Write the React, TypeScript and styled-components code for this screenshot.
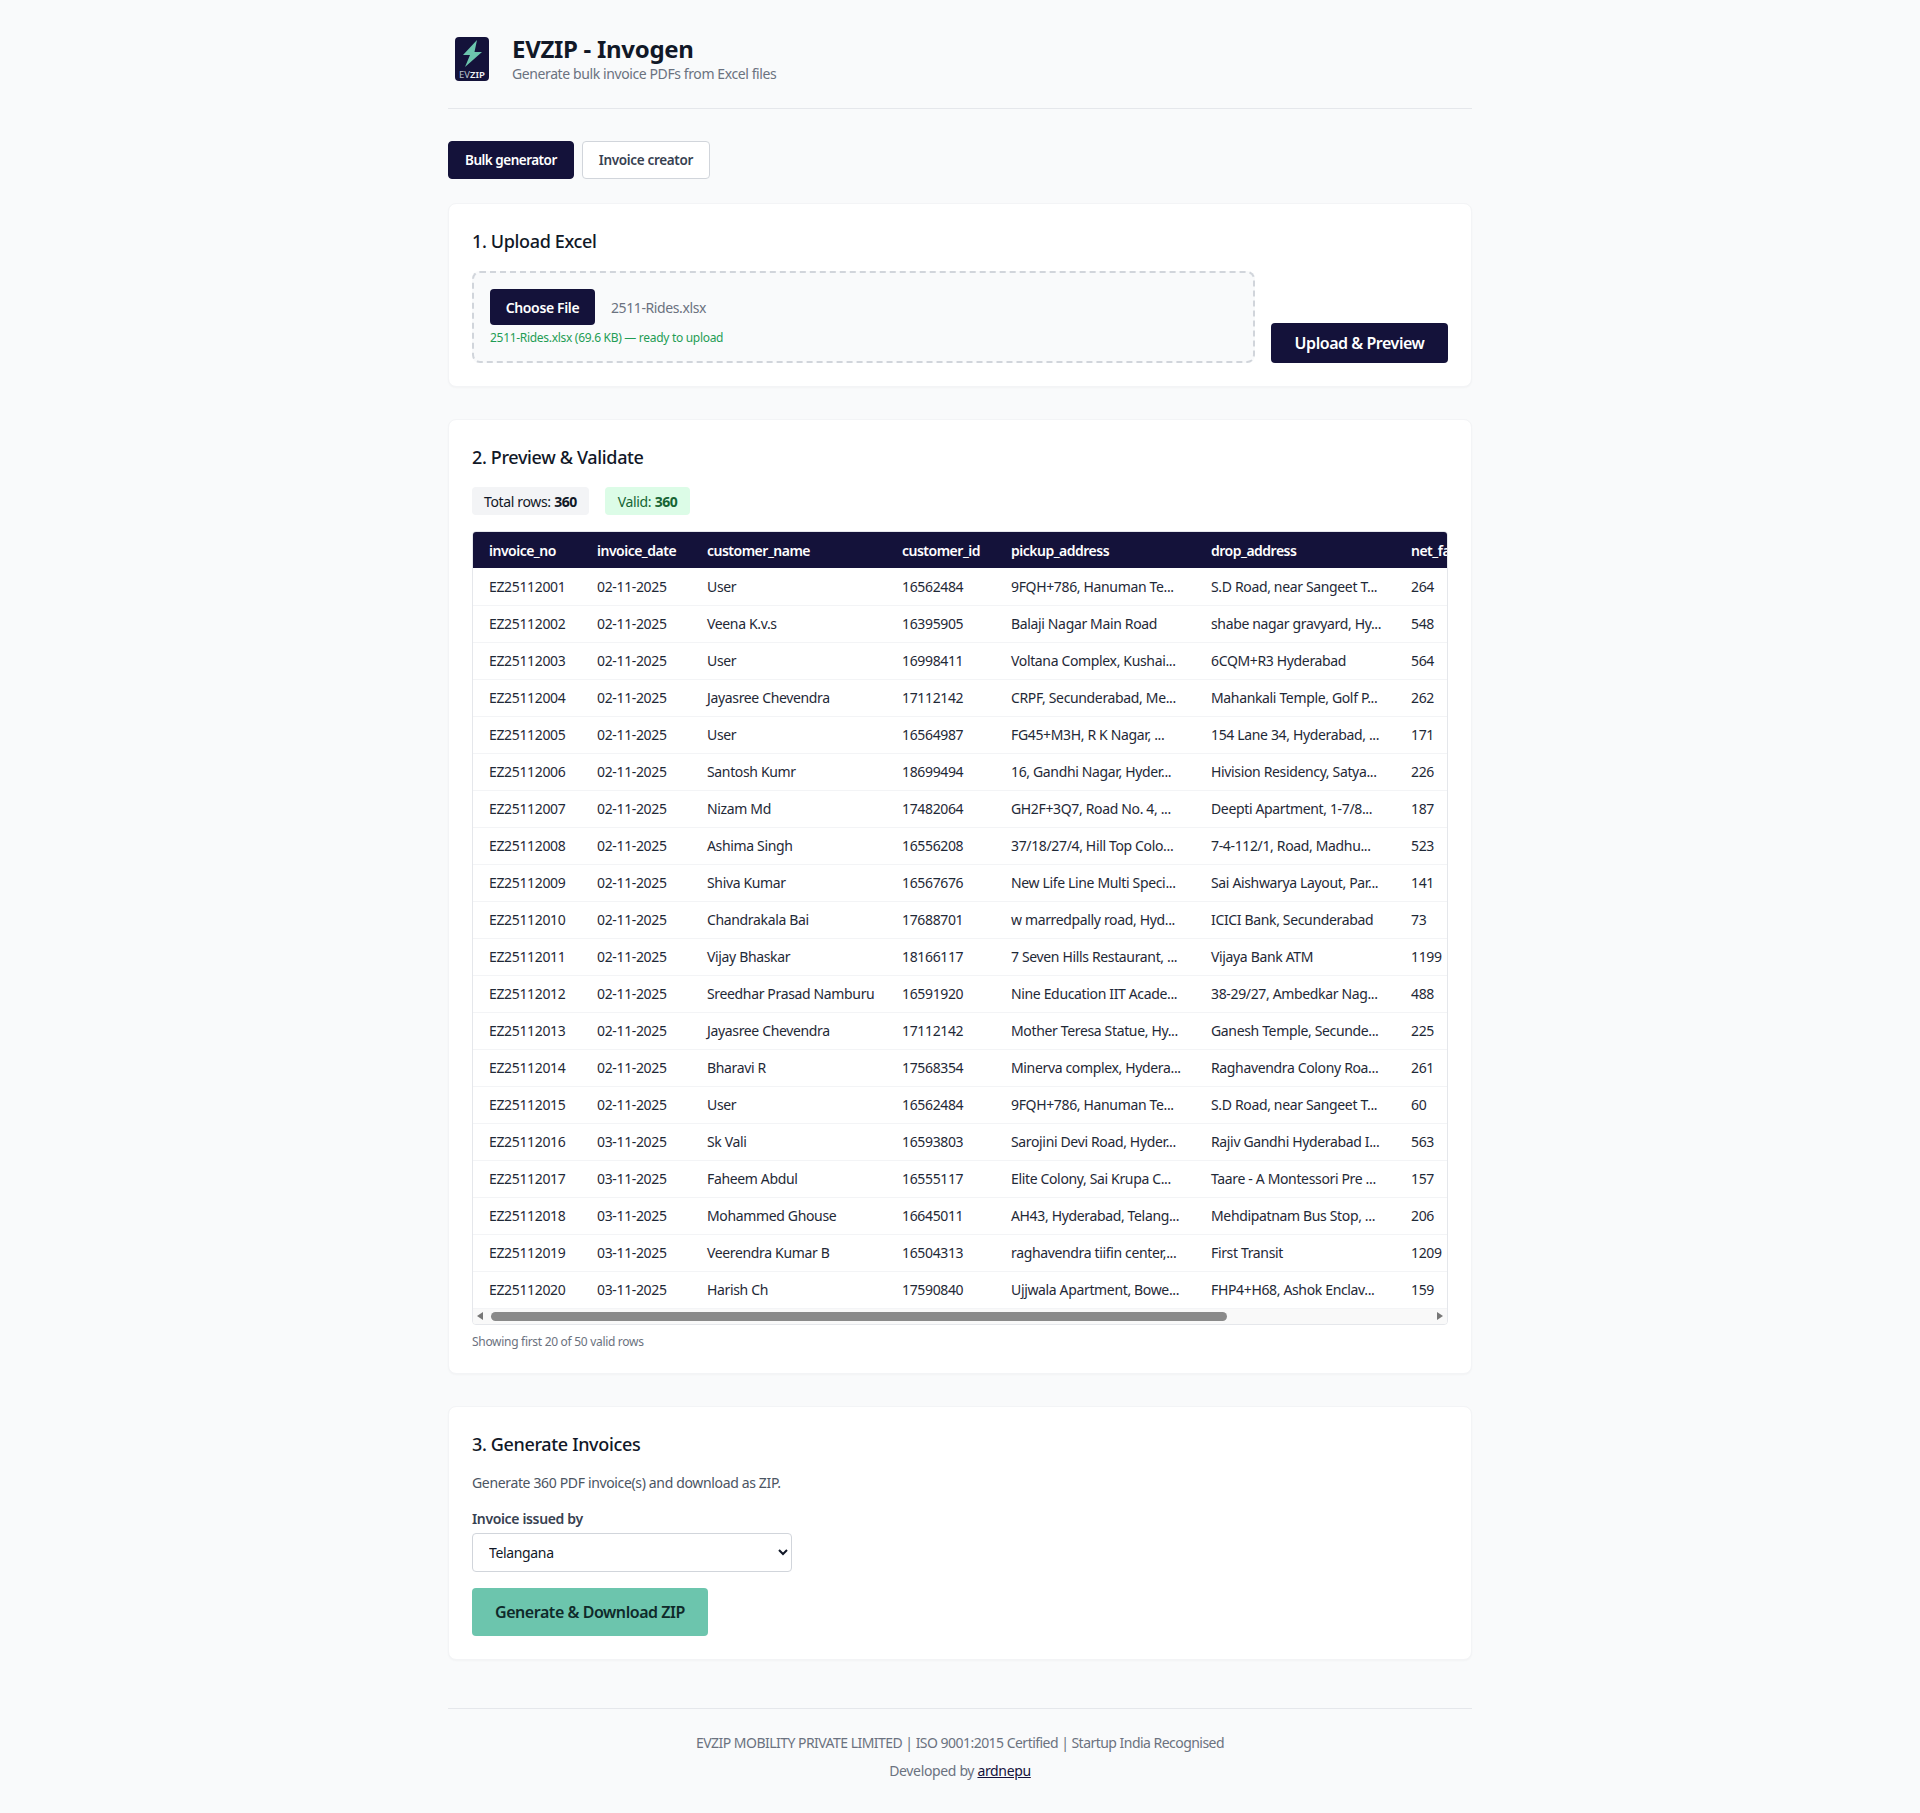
import React from 'react';
import styled, { createGlobalStyle } from 'styled-components';

const GlobalStyle = createGlobalStyle`
  * { box-sizing: border-box; }
  html, body { margin: 0; padding: 0; }
  body {
    background: #f9fafb;
    color: #111827;
    font-family: "Noto Sans", "Open Sans", Arial, sans-serif;
    font-size: 14px;
    letter-spacing: -0.35px;
  }
`;

const navy = '#14123a';

const Page = styled.div`
  width: 1024px;
  margin: 0 auto;
  height: 1813px;
  padding-top: 32px;
`;

const Header = styled.header`
  display: flex;
  align-items: center;
  gap: 16px;
  height: 77px;
  padding-bottom: 23px;
  border-bottom: 1px solid #e5e7eb;
`;

const LogoBox = styled.div`
  width: 48px;
  height: 48px;
  display: flex;
  align-items: center;
  justify-content: center;
`;

const BrandTitle = styled.h1`
  margin: 0;
  font-size: 24px;
  line-height: 28px;
  font-weight: 700;
  letter-spacing: -0.3px;
  color: #111827;
`;

const BrandSub = styled.p`
  margin: 2px 0 0;
  font-size: 14px;
  line-height: 18px;
  letter-spacing: -0.4px;
  color: #6b7280;
`;

const Tabs = styled.nav`
  display: flex;
  gap: 8px;
  margin: 32px 0 24px;
`;

const Tab = styled.button<{ $active?: boolean }>`
  height: 38px;
  padding: 0 16px;
  border-radius: 4px;
  border: 1px solid ${p => (p.$active ? navy : '#d1d5db')};
  background: ${p => (p.$active ? navy : '#ffffff')};
  color: ${p => (p.$active ? '#ffffff' : '#374151')};
  font: 600 13.5px "Noto Sans", sans-serif;
  letter-spacing: ${p => (p.$active ? '-0.5px' : '-0.33px')};
`;

const Card = styled.section`
  background: #ffffff;
  border: 1px solid #f3f4f6;
  border-radius: 8px;
  box-shadow: 0 1px 2px rgba(0, 0, 0, 0.03);
  padding: 23px;
  margin-bottom: 32px;
`;

const CardTitle = styled.h2`
  margin: 0 0 16px;
  font-size: 18px;
  line-height: 28px;
  font-weight: 500;
  letter-spacing: -0.35px;
  color: #111827;
`;

const UploadRow = styled.div`
  display: flex;
  align-items: flex-end;
  gap: 16px;
`;

const DropZone = styled.div`
  width: 783px;
  height: 92px;
  padding: 16px;
  background: #f9fafb;
  border: 2px dashed #d1d5db;
  border-radius: 8px;
`;

const FileRow = styled.div`
  display: flex;
  align-items: center;
  gap: 16px;
  height: 36px;
`;

const ChooseButton = styled.button`
  height: 36px;
  width: 105px;
  border: 0;
  border-radius: 4px;
  background: ${navy};
  color: #ffffff;
  font: 600 14px "Noto Sans", sans-serif;
  letter-spacing: -0.35px;
`;

const FileName = styled.span`
  font-size: 14px;
  letter-spacing: -0.4px;
  color: #6b7280;
`;

const FileStatus = styled.div`
  margin-top: 4px;
  font-size: 12px;
  line-height: 18px;
  letter-spacing: -0.3px;
  color: #1f9d55;
`;

const PrimaryButton = styled.button`
  width: 177px;
  height: 40px;
  border: 0;
  border-radius: 4px;
  background: ${navy};
  color: #ffffff;
  font: 600 16px "Noto Sans", sans-serif;
  letter-spacing: -0.45px;
`;

const Badges = styled.div`
  display: flex;
  gap: 16px;
  margin-bottom: 16px;
`;

const Badge = styled.div<{ $valid?: boolean }>`
  height: 28px;
  padding: 0 ${p => (p.$valid ? '13px' : '12px')};
  display: flex;
  align-items: center;
  gap: 3.5px;
  border-radius: 4px;
  background: ${p => (p.$valid ? '#dcfce7' : '#f3f4f6')};
  color: ${p => (p.$valid ? '#166534' : '#111827')};
  font-size: 14px;
  b { font-weight: 700; letter-spacing: -0.5px; }
`;

const TableFrame = styled.div`
  width: 976px;
  border: 1px solid #e5e7eb;
  border-radius: 4px;
  overflow: hidden;
`;

const TableClip = styled.div`
  overflow: hidden;
`;

const Table = styled.table`
  width: 1300px;
  table-layout: fixed;
  border-collapse: collapse;
  font-size: 14px;
`;

const Th = styled.th`
  height: 36px;
  padding: 0 16px;
  background: ${navy};
  color: #ffffff;
  font-weight: 600;
  letter-spacing: -0.5px;
  text-align: left;
  white-space: nowrap;
  overflow: hidden;
`;

const Td = styled.td`
  height: 37px;
  padding: 0 16px;
  color: #1f2937;
  white-space: nowrap;
  overflow: hidden;
  border-bottom: 1px solid #f3f4f6;
`;

const ScrollBar = styled.div`
  height: 15px;
  display: flex;
  align-items: center;
  gap: 4px;
  padding: 0 4px;
  background: #f9f9f9;
`;

const Arrow = styled.span<{ $right?: boolean }>`
  width: 0;
  height: 0;
  border-top: 4.5px solid transparent;
  border-bottom: 4.5px solid transparent;
  ${p =>
    p.$right
      ? 'border-left: 6px solid #777; margin-left: auto;'
      : 'border-right: 6px solid #777;'}
`;

const Thumb = styled.span`
  width: 736px;
  height: 9px;
  margin-left: 4px;
  border-radius: 5px;
  background: #8a8a8a;
`;

const TableNote = styled.p`
  margin: 10px 0 1px;
  font-size: 12px;
  line-height: 14px;
  letter-spacing: -0.3px;
  color: #6b7280;
`;

const GenerateTitle = styled(CardTitle)`
  margin-bottom: 15px;
`;

const Hint = styled.p`
  margin: 0 0 16px;
  font-size: 14px;
  line-height: 20px;
  color: #4b5563;
`;

const FieldLabel = styled.label`
  display: block;
  margin-bottom: 4px;
  font-size: 14px;
  line-height: 20px;
  font-weight: 600;
  color: #374151;
`;

const Select = styled.select`
  display: block;
  width: 320px;
  height: 39px;
  padding: 0 12px;
  background: #ffffff;
  border: 1px solid #d1d5db;
  border-radius: 4px;
  font: 14px "Noto Sans", sans-serif;
  letter-spacing: -0.35px;
  color: #111827;
`;

const GenerateButton = styled.button`
  display: block;
  width: 236px;
  height: 48px;
  margin-top: 16px;
  border: 0;
  border-radius: 4px;
  background: #6cc5ad;
  color: #0f2a2a;
  font: 600 16px "Noto Sans", sans-serif;
  letter-spacing: -0.45px;
`;

const Footer = styled.footer`
  margin-top: 48px;
  padding-top: 24px;
  border-top: 1px solid #e5e7eb;
  text-align: center;
  font-size: 14px;
  color: #6b7280;
`;

const FooterLine = styled.p<{ $tight?: boolean }>`
  margin: 0 0 8px;
  line-height: 20px;
  letter-spacing: ${p => (p.$tight ? '-0.53px' : '-0.35px')};
  a { color: ${navy}; text-decoration: underline; }
`;

const columns: { key: string; width: number }[] = [
  { key: 'invoice_no', width: 108 },
  { key: 'invoice_date', width: 110 },
  { key: 'customer_name', width: 195 },
  { key: 'customer_id', width: 109 },
  { key: 'pickup_address', width: 200 },
  { key: 'drop_address', width: 200 },
  { key: 'net_fare', width: 378 },
];

const rows: string[][] = [
  ['EZ25112001', '02-11-2025', 'User', '16562484', '9FQH+786, Hanuman Te...', 'S.D Road, near Sangeet T...', '264'],
  ['EZ25112002', '02-11-2025', 'Veena K.v.s', '16395905', 'Balaji Nagar Main Road', 'shabe nagar gravyard, Hy...', '548'],
  ['EZ25112003', '02-11-2025', 'User', '16998411', 'Voltana Complex, Kushai...', '6CQM+R3 Hyderabad', '564'],
  ['EZ25112004', '02-11-2025', 'Jayasree Chevendra', '17112142', 'CRPF, Secunderabad, Me...', 'Mahankali Temple, Golf P...', '262'],
  ['EZ25112005', '02-11-2025', 'User', '16564987', 'FG45+M3H, R K Nagar, ...', '154 Lane 34, Hyderabad, ...', '171'],
  ['EZ25112006', '02-11-2025', 'Santosh Kumr', '18699494', '16, Gandhi Nagar, Hyder...', 'Hivision Residency, Satya...', '226'],
  ['EZ25112007', '02-11-2025', 'Nizam Md', '17482064', 'GH2F+3Q7, Road No. 4, ...', 'Deepti Apartment, 1-7/8...', '187'],
  ['EZ25112008', '02-11-2025', 'Ashima Singh', '16556208', '37/18/27/4, Hill Top Colo...', '7-4-112/1, Road, Madhu...', '523'],
  ['EZ25112009', '02-11-2025', 'Shiva Kumar', '16567676', 'New Life Line Multi Speci...', 'Sai Aishwarya Layout, Par...', '141'],
  ['EZ25112010', '02-11-2025', 'Chandrakala Bai', '17688701', 'w marredpally road, Hyd...', 'ICICI Bank, Secunderabad', '73'],
  ['EZ25112011', '02-11-2025', 'Vijay Bhaskar', '18166117', '7 Seven Hills Restaurant, ...', 'Vijaya Bank ATM', '1199'],
  ['EZ25112012', '02-11-2025', 'Sreedhar Prasad Namburu', '16591920', 'Nine Education IIT Acade...', '38-29/27, Ambedkar Nag...', '488'],
  ['EZ25112013', '02-11-2025', 'Jayasree Chevendra', '17112142', 'Mother Teresa Statue, Hy...', 'Ganesh Temple, Secunde...', '225'],
  ['EZ25112014', '02-11-2025', 'Bharavi R', '17568354', 'Minerva complex, Hydera...', 'Raghavendra Colony Roa...', '261'],
  ['EZ25112015', '02-11-2025', 'User', '16562484', '9FQH+786, Hanuman Te...', 'S.D Road, near Sangeet T...', '60'],
  ['EZ25112016', '03-11-2025', 'Sk Vali', '16593803', 'Sarojini Devi Road, Hyder...', 'Rajiv Gandhi Hyderabad I...', '563'],
  ['EZ25112017', '03-11-2025', 'Faheem Abdul', '16555117', 'Elite Colony, Sai Krupa C...', 'Taare - A Montessori Pre ...', '157'],
  ['EZ25112018', '03-11-2025', 'Mohammed Ghouse', '16645011', 'AH43, Hyderabad, Telang...', 'Mehdipatnam Bus Stop, ...', '206'],
  ['EZ25112019', '03-11-2025', 'Veerendra Kumar B', '16504313', 'raghavendra tiifin center,...', 'First Transit', '1209'],
  ['EZ25112020', '03-11-2025', 'Harish Ch', '17590840', 'Ujjwala Apartment, Bowe...', 'FHP4+H68, Ashok Enclav...', '159'],
];

const Logo: React.FC = () => (
  <svg width="34" height="44" viewBox="0 0 34 44">
    <rect width="34" height="44" rx="4" fill={navy} />
    <path d="M22 3 L8 18 L15 18 L10 30 L27 15 L19.5 15 Z" fill="#6cc5ad" />
    <text x="17" y="40.5" textAnchor="middle" fontSize="9.5" letterSpacing="0" fill="#b9c0cc" fontFamily="Noto Sans, sans-serif">
      EV<tspan fontWeight="600" fill="#f3f4f6">ZIP</tspan>
    </text>
  </svg>
);

const App: React.FC = () => (
  <Page>
    <GlobalStyle />
    <Header>
      <LogoBox>
        <Logo />
      </LogoBox>
      <div>
        <BrandTitle>EVZIP - Invogen</BrandTitle>
        <BrandSub>Generate bulk invoice PDFs from Excel files</BrandSub>
      </div>
    </Header>

    <Tabs>
      <Tab $active>Bulk generator</Tab>
      <Tab>Invoice creator</Tab>
    </Tabs>

    <Card>
      <CardTitle>1. Upload Excel</CardTitle>
      <UploadRow>
        <DropZone>
          <FileRow>
            <ChooseButton>Choose File</ChooseButton>
            <FileName>2511-Rides.xlsx</FileName>
          </FileRow>
          <FileStatus>2511-Rides.xlsx (69.6 KB) — ready to upload</FileStatus>
        </DropZone>
        <PrimaryButton>Upload &amp; Preview</PrimaryButton>
      </UploadRow>
    </Card>

    <Card>
      <CardTitle>2. Preview &amp; Validate</CardTitle>
      <Badges>
        <Badge>Total rows: <b>360</b></Badge>
        <Badge $valid>Valid: <b>360</b></Badge>
      </Badges>
      <TableFrame>
        <TableClip>
          <Table>
            <colgroup>
              {columns.map(c => (
                <col key={c.key} width={c.width} />
              ))}
            </colgroup>
            <thead>
              <tr>
                {columns.map(c => (
                  <Th key={c.key}>{c.key}</Th>
                ))}
              </tr>
            </thead>
            <tbody>
              {rows.map(row => (
                <tr key={row[0]}>
                  {row.map((cell, i) => (
                    <Td key={i}>{cell}</Td>
                  ))}
                </tr>
              ))}
            </tbody>
          </Table>
        </TableClip>
        <ScrollBar>
          <Arrow />
          <Thumb />
          <Arrow $right />
        </ScrollBar>
      </TableFrame>
      <TableNote>Showing first 20 of 50 valid rows</TableNote>
    </Card>

    <Card>
      <GenerateTitle>3. Generate Invoices</GenerateTitle>
      <Hint>Generate 360 PDF invoice(s) and download as ZIP.</Hint>
      <FieldLabel>Invoice issued by</FieldLabel>
      <Select defaultValue="Telangana">
        <option>Telangana</option>
      </Select>
      <GenerateButton>Generate &amp; Download ZIP</GenerateButton>
    </Card>

    <Footer>
      <FooterLine $tight>EVZIP MOBILITY PRIVATE LIMITED | ISO 9001:2015 Certified | Startup India Recognised</FooterLine>
      <FooterLine>Developed by <a href="#">ardnepu</a></FooterLine>
    </Footer>
  </Page>
);

export default App;
